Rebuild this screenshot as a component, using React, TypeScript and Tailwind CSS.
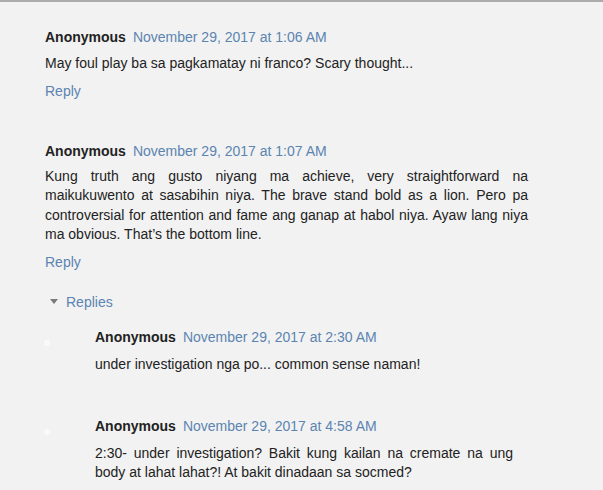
import React from "react";

const font = { fontFamily: '"Liberation Sans", Arial, sans-serif' };

function Header({ date }: { date: string }) {
  return (
    <div className="flex items-center h-[20px] leading-[20px] text-[14px] whitespace-nowrap">
      <span className="font-bold text-[#222222]">Anonymous</span>
      <span className="ml-[7px] text-[#5b84b1]">{date}</span>
    </div>
  );
}

export default function App() {
  return (
    <div className="w-[603px] h-[490px] bg-[#f2f2f2] overflow-hidden" style={font}>
      <div className="h-[2px] bg-[#acacac]" />
      {/* Comment 1 */}
      <div className="pl-[45px] pt-[25px] w-[528px]">
        <Header date="November 29, 2017 at 1:06 AM" />
        <p className="mt-[7px] text-[14px] leading-[19.6px] text-[#222222] text-justify">
          May foul play ba sa pagkamatay ni franco? Scary thought...
        </p>
        <div className="mt-[7px] text-[14px] leading-[20px] text-[#5b84b1]">Reply</div>
      </div>
      {/* Comment 2 */}
      <div className="pl-[45px] mt-[40px] w-[528px]">
        <Header date="November 29, 2017 at 1:07 AM" />
        <p className="mt-[6px] text-[14px] leading-[19.6px] text-[#222222] text-justify">
          Kung truth ang gusto niyang ma achieve, very straightforward na maikukuwento at sasabihin
          niya. The brave stand bold as a lion. Pero pa controversial for attention and fame ang
          ganap at habol niya. Ayaw lang niya ma obvious. That’s the bottom line.
        </p>
        <div className="mt-[7px] text-[14px] leading-[20px] text-[#5b84b1]">Reply</div>
      </div>
      {/* Replies toggle */}
      <div className="mt-[20px] pl-[50px] flex items-center h-[20px]">
        <svg width="8" height="5" viewBox="0 0 8 5" className="mr-[8px]">
          <polygon points="0,0 8,0 4,5" fill="#7a7a7a" />
        </svg>
        <span className="text-[14px] leading-[20px] text-[#5b84b1]">Replies</span>
      </div>
      {/* Reply 1 */}
      <div className="relative mt-[15px] pl-[95px] w-[513px]">
        <div className="absolute left-[44px] top-[13px] w-[6px] h-[6px] rounded-full bg-white opacity-60" />
        <Header date="November 29, 2017 at 2:30 AM" />
        <p className="mt-[8px] text-[14px] leading-[19.6px] text-[#222222] text-justify">
          under investigation nga po... common sense naman!
        </p>
      </div>
      {/* Reply 2 */}
      <div className="relative mt-[41px] pl-[95px] w-[513px]">
        <div className="absolute left-[44px] top-[13px] w-[6px] h-[6px] rounded-full bg-white opacity-60" />
        <Header date="November 29, 2017 at 4:58 AM" />
        <p className="mt-[8px] text-[14px] leading-[19.6px] text-[#222222] text-justify">
          2:30- under investigation? Bakit kung kailan na cremate na ung body at lahat lahat?! At
          bakit dinadaan sa socmed?
        </p>
      </div>
    </div>
  );
}
